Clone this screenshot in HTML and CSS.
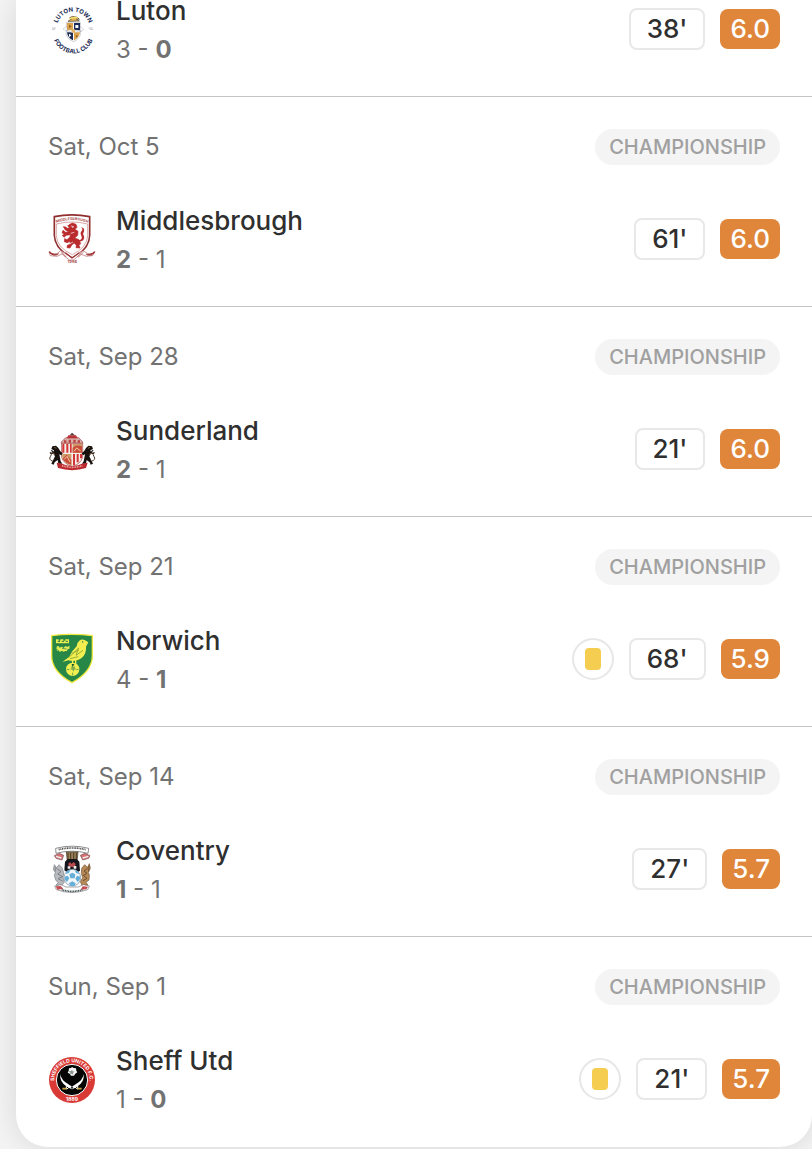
FILE: index.html
```html
<!DOCTYPE html>
<html lang="en">
<head>
<meta charset="utf-8">
<meta name="viewport" content="width=device-width, initial-scale=1">
<title>Recent matches</title>
<link rel="stylesheet" href="styles.css">
</head>
<body>
<main class="card">
<ul class="matches">
  <li class="match">
    <div class="match-main">
      <svg class="crest" viewBox="24 9 144 156" role="img" aria-label="Luton crest">
        <defs>
          <path id="luton-top" d="M52 72A49 49 0 0 1 147 72"/>
          <path id="luton-bottom" d="M38 98A62 62 0 0 0 162 98"/>
        </defs>
        <text class="crest-text luton-text"><textPath href="#luton-top" startOffset="50%" text-anchor="middle">LUTON TOWN</textPath></text>
        <text class="crest-text luton-text"><textPath href="#luton-bottom" startOffset="50%" text-anchor="middle">FOOTBALL CLUB</textPath></text>
        <path d="M36 84h12M36 88h9M146 84h12M149 88h10" stroke="#a9aeb8" stroke-width="2"/>
        <path d="M79 67h42v37q-4 14-21 21-17-7-21-21z" fill="#fff" stroke="#b8b8bc" stroke-width="2"/>
        <path d="M81 69h18v22H81zM102 97h18q-2 17-18 24z" fill="#dda34c"/>
        <path d="M102 69h18v22h-18zM81 97h18v24q-16-7-18-24z" fill="#1b2b55"/>
        <path d="M106 75h9v9h-9zM87 101l7 5-7 6z" fill="#fff"/>
        <path d="M87 74l8 5-8 6zM107 105l7 2-4 7z" fill="#8d6426"/>
        <path d="M78 92l20-3 27 4-26 5zM69 87l12-7v15zM121 80l11 8-11 8z" fill="#fff" stroke="#93979f"/>
        <circle cx="100" cy="93" r="6" fill="#e4b66c"/>
        <path d="M84 64l10-7-5-4 9-4 14 3 6 6-10-2 10 7z" fill="#e2b24d" stroke="#42392f" stroke-width="2"/>
        <path d="M88 56l15-4 10 2" fill="none" stroke="#f5e273" stroke-width="4"/>
      </svg>
      <div class="fixture"><h2 class="opponent">Luton</h2><p class="score">3 - <b>0</b></p></div>
      <div class="stats"><span class="minutes">38'</span><span class="rating">6.0</span></div>
    </div>
  </li>
  <li class="match">
    <div class="match-head"><time datetime="10-05">Sat, Oct 5</time><span class="league">CHAMPIONSHIP</span></div>
    <div class="match-main">
      <svg class="crest" viewBox="24 24 144 156" role="img" aria-label="Middlesbrough crest">
        <defs><path id="boro-top" d="M50 53Q97 37 142 53"/></defs>
        <path d="M43 35Q96 24 149 35V91Q148 133 97 159 45 133 43 91z" fill="#fff" stroke="#8f2f2f" stroke-width="5"/>
        <path d="M49 57Q96 45 143 57V92Q141 128 97 149 51 128 49 92z" fill="none" stroke="#c97b7b" stroke-width="2"/>
        <text class="crest-text boro-text"><textPath href="#boro-top" startOffset="50%" text-anchor="middle">MIDDLESBROUGH</textPath></text>
        <path d="M87 59l10-5 11 4 3 9-6 6 9 6-1 12-9 8 13 5 5 12-5 5 3 8-12-1 1-7-6-7-8 6-5 9-9-1 1-7 9-3-1-9-8 4-9-3 1-9 7 3 9-8 1-7-12 2-7 6-5-6 6-3-7-5 3-7 8 6 9-2-10-5-6-10 7 1 5 4 7-2-6-5z" fill="#b92b2d" stroke="#b92b2d" stroke-width="2"/>
        <path d="M113 106q17-1 11-14-5-8 1-14 5-6-2-12 12 3 9 13-5 7 0 15 5 15-19 17z" fill="#b92b2d"/>
        <path d="M93 63l8 2-5 3M92 85l11-3M99 111l-9 5" fill="none" stroke="#fff" stroke-width="2"/>
        <path d="M27 140q9 10 25 5l10-8 14 8 20 14 22-15 11-7 13 8q16 4 22-5l-5 11-20 3-17-7-22 18H88L66 147l-15 7-20-2z" fill="#fff" stroke="#b46464" stroke-width="2"/>
        <path d="M28 140q8 13 25 8M164 140q-8 13-25 8M76 143l20 16 22-16" fill="none" stroke="#9b3434" stroke-width="4"/>
        <path d="M40 151l17-5M65 142l14 14M114 156l15-15M138 148l17 4" stroke="#b86060" stroke-width="5" stroke-dasharray="2 2"/>
        <text class="crest-text boro-year" x="97" y="173" text-anchor="middle">1986</text>
      </svg>
      <div class="fixture"><h2 class="opponent">Middlesbrough</h2><p class="score"><b>2</b> - 1</p></div>
      <div class="stats"><span class="minutes">61'</span><span class="rating">6.0</span></div>
    </div>
  </li>
  <li class="match">
    <div class="match-head"><time datetime="09-28">Sat, Sep 28</time><span class="league">CHAMPIONSHIP</span></div>
    <div class="match-main">
      <svg class="crest" viewBox="24 9 144 156" role="img" aria-label="Sunderland crest">
        <path d="M64 66l13-13h39l12 13v4H64z" fill="#d9afa9" stroke="#963d3b" stroke-width="2"/>
        <path d="M80 55l5-9h23l5 9z" fill="#b83237"/>
        <path d="M89 46l7-8 9 8z" fill="#5a403d"/>
        <path d="M72 61h7v7h-7zM86 59h7v9h-7zM100 59h7v9h-7zM113 61h7v7h-7z" fill="#bc4142"/>
        <path d="M65 70h63v42q-7 21-31 27-25-6-32-27z" fill="#f4eee7" stroke="#9b3330" stroke-width="2"/>
        <path d="M67 72h6v26h-6zM79 72h6v26h-6zM90 72h5v26h-5zM99 102h6v33h-6zM110 102h6v25h-6zM120 102h6v13h-6z" fill="#d33435"/>
        <path d="M98 72h28v26H98zM67 102h27v34q-23-7-27-25z" fill="#cc9b68"/>
        <path d="M98 83q12-11 28-4v19H98zM68 116l12-12 14 16v14q-20-6-26-18z" fill="#c94e3b"/>
        <path d="M102 94l8-10 12 9M73 118l8-9 9 17" fill="none" stroke="#f2d1a0" stroke-width="3"/>
        <path d="M37 79l11-2 7 7 6 10 7 6-4 6-6-3 2 10 2 11 5 7H55l-2-11-9 7-3 7-7-3 6-12 5-10-5-8-9 1-2-5 9 1-6-8 5 1 3 4 2-4-8-4z" fill="#18120f"/>
        <path d="M156 79l-11-2-7 7-6 10-7 6 4 6 6-3-2 10-2 11-5 7h12l2-11 9 7 3 7 7-3-6-12-5-10 5-8 9 1 2-5-9 1 6-8-5 1-3 4-2-4 8-4z" fill="#18120f"/>
        <path d="M39 124q-14-5-8-14 6-6 0-13M154 124q15-5 8-14-5-6 0-13" fill="none" stroke="#4a3526" stroke-width="3"/>
        <path d="M43 82l6 3M39 101l6 2M150 82l-6 3M154 101l-6 2" stroke="#b98d51" stroke-width="2"/>
        <path d="M50 128l16 3q31 14 60 0l17-3-5 16q-41 13-84 0z" fill="#bb292f"/>
        <path d="M66 137q31 10 61 0" fill="none" stroke="#ecaaa1" stroke-width="5" stroke-dasharray="3 2"/>
      </svg>
      <div class="fixture"><h2 class="opponent">Sunderland</h2><p class="score"><b>2</b> - 1</p></div>
      <div class="stats"><span class="minutes">21'</span><span class="rating">6.0</span></div>
    </div>
  </li>
  <li class="match">
    <div class="match-head"><time datetime="09-21">Sat, Sep 21</time><span class="league">CHAMPIONSHIP</span></div>
    <div class="match-main">
      <svg class="crest" viewBox="24 24 144 156" role="img" aria-label="Norwich crest">
        <path d="M35 32Q95 24 157 32V92Q157 139 96 173 35 139 35 92z" fill="#268746" stroke="#f0e83e" stroke-width="4"/>
        <path d="M48 43h8v4h5v-4h9v4h6v-4h11v12H48z" fill="#eaf04d"/>
        <path d="M53 49h7m5 0h7m5 0h7M48 58h39" stroke="#347540" stroke-width="3"/>
        <path d="M48 67q8-8 11 1l6-3 6 4 4-5 8 1 6-3-1 9-7 3 1 5-6-1-5 3-4-4-8 4-2-5-7 2 3-6-6 1 5-5z" fill="#e4ed57"/>
        <path d="M66 70l14 2M70 82h18" stroke="#287947" stroke-width="2"/>
        <path d="M145 52l-10-6q-9-5-17 1-7 5-8 17-14 13-23 32l-20 15 18-5q23 6 39-6 16-13 14-35z" fill="#f3ef50"/>
        <path d="M86 98l30-29-8 22 21-15M90 101l25-6M96 85l20-9" fill="none" stroke="#9aae36" stroke-width="3"/>
        <circle cx="128" cy="51" r="2" fill="#24693b"/>
        <path d="M98 105v13m9-13v13" stroke="#f3ef50" stroke-width="4"/>
        <circle cx="98" cy="133" r="20" fill="#f3ef50"/>
        <path d="M98 119l2 7 6-2-2 6 6 2-7 2-3 6-3-6-8-2 6-2-3-6 6 2z" fill="#7dac4c"/>
        <path d="M96 117l2 8 4-8M80 133l8 1M109 134l7-1M98 143v8" stroke="#278044" stroke-width="2"/>
      </svg>
      <div class="fixture"><h2 class="opponent">Norwich</h2><p class="score">4 - <b>1</b></p></div>
      <div class="stats"><span class="booking" role="img" aria-label="Yellow card"></span><span class="minutes">68'</span><span class="rating">5.9</span></div>
    </div>
  </li>
  <li class="match">
    <div class="match-head"><time datetime="09-14">Sat, Sep 14</time><span class="league">CHAMPIONSHIP</span></div>
    <div class="match-main">
      <svg class="crest" viewBox="24 15 144 156" role="img" aria-label="Coventry crest">
        <path d="M47 31q50-13 99 0l-2 15q-49-13-96 0z" fill="#fff" stroke="#555" stroke-width="2"/>
        <path d="M56 35q41-10 81 0" fill="none" stroke="#444" stroke-width="5" stroke-dasharray="3 2"/>
        <path d="M43 53l15-7 13 6-5 14-18-5zM121 52l14-6 15 7-4 8-18 5z" fill="#d87176" stroke="#6e5252" stroke-width="2"/>
        <path d="M48 55l16 5M128 60l17-5" stroke="#eee" stroke-width="4"/>
        <path d="M79 42h35l-3 29H82z" fill="#9d8053" stroke="#3f3427" stroke-width="2"/>
        <path d="M84 45v25m8-26v26m9-26v26m8-25v25" stroke="#453b2b" stroke-width="3"/>
        <path d="M75 71l8-8h27l8 8 2 27-10 6H83l-10-7z" fill="#15161b"/>
        <path d="M85 77l6-5 3 6 7-6 6 6-2 7-8 3-11-4z" fill="#b74b4e"/>
        <path d="M83 85h8v7h-8zm18-1h8v8h-8z" fill="#eee"/>
        <circle cx="97" cy="119" r="25" fill="#f2f8fa" stroke="#71889b" stroke-width="2"/>
        <path d="M88 109l9-5 9 5-2 12H91zM73 116l10-3 5 8-7 11q-8-5-8-16zM121 116l-10-3-5 9 7 10q8-6 8-16zM87 136l10-6 10 6-3 8H91zM80 99l11-3-4 9-9 3zM104 96l9 4 5 8-10-3z" fill="#65afd9"/>
        <path d="M43 80l7 9 7-9 9 9 5 15-2 16 4 12-7 10H48l7-9-7-5-5-15 3-10-6-8z" fill="#b8babd" stroke="#797d81" stroke-width="2"/>
        <path d="M49 91l14 10-10 7 15 8-14 6 14 7M45 86l1 14" fill="none" stroke="#7c8189" stroke-width="3"/>
        <path d="M148 77l-5 11-9-8-9 11-1 15 4 13-7 12 5 11h18l-6-9 9-7 1-15-3-8 6-12z" fill="#b58958" stroke="#735437" stroke-width="2"/>
        <path d="M143 91l-11 8 9 7-11 6 11 9-12 7M147 83l-1 18" fill="none" stroke="#71502f" stroke-width="3"/>
        <path d="M44 144l19-4 15 7h37l15-7 18 4-5 11q-48 17-94 0z" fill="#fff" stroke="#777" stroke-width="2"/>
        <path d="M47 145l15-1 8 8-18 3zM128 145l16 1-5 8-17 1z" fill="#c44d55"/>
        <path d="M65 155q31 10 63 0" fill="none" stroke="#37474b" stroke-width="5" stroke-dasharray="3 2"/>
      </svg>
      <div class="fixture"><h2 class="opponent">Coventry</h2><p class="score"><b>1</b> - 1</p></div>
      <div class="stats"><span class="minutes">27'</span><span class="rating">5.7</span></div>
    </div>
  </li>
  <li class="match">
    <div class="match-head"><time datetime="09-01">Sun, Sep 1</time><span class="league">CHAMPIONSHIP</span></div>
    <div class="match-main">
      <svg class="crest" viewBox="24 15 144 156" role="img" aria-label="Sheffield United crest">
        <defs><path id="sheff-top" d="M48 118A53 53 0 1 1 144 118"/></defs>
        <circle cx="96" cy="96" r="69" fill="#d93a36"/>
        <circle cx="96" cy="96" r="47" fill="#050505" stroke="#fff" stroke-width="3"/>
        <text class="crest-text sheff-text"><textPath href="#sheff-top" startOffset="50%" text-anchor="middle">SHEFFIELD UNITED F.C.</textPath></text>
        <text class="crest-text sheff-year" x="96" y="160" text-anchor="middle">1889</text>
        <path d="M61 78q3 19 22 29l17 12-5 5-14-8q-23-13-20-38zM131 78q-3 19-22 29l-17 12 5 5 14-8q23-13 20-38z" fill="#fff"/>
        <path d="M91 114l-10 9M101 114l11 9M79 112v12m34-12v12" stroke="#fff" stroke-width="3"/>
        <path d="M67 122h13M112 122h13" stroke="#c8a542" stroke-width="5"/>
        <path d="M96 57l5 3 7 1 1 7 3 5-6 4-4 6h-9l-4-6-6-3 3-6 1-7 6-1z" fill="#f6f6f6"/>
        <path d="M96 65l2 5 6 1-5 3 1 6-5-3-5 3 1-6-5-4 7-1z" fill="#8d9697"/>
      </svg>
      <div class="fixture"><h2 class="opponent">Sheff Utd</h2><p class="score">1 - <b>0</b></p></div>
      <div class="stats"><span class="booking" role="img" aria-label="Yellow card"></span><span class="minutes">21'</span><span class="rating">5.7</span></div>
    </div>
  </li>
</ul>
</main>
</body>
</html>
```
FILE: styles.css
```css
* { box-sizing: border-box; }

body {
  margin: 0;
  padding-left: 16px;
  background: #f4f4f4;
  color: #2f2f2f;
  font-family: Inter, "Liberation Sans", sans-serif;
  overflow-x: hidden;
}

.card {
  background: #fff;
  border-radius: 0 0 32px 32px;
  box-shadow: 0 0 32px rgba(0, 0, 0, 0.12);
  margin-bottom: 2px;
}

.matches { margin: 0; padding: 0; list-style: none; }

.match {
  padding: 32px 32px 38px;
  border-bottom: 1px solid #c4c4c4;
}
.match:first-child { padding-top: 0; }
.match:last-child { border-bottom-color: transparent; }

.match-head {
  display: flex;
  align-items: center;
  justify-content: space-between;
  margin-bottom: 45px;
  color: #727272;
  font-size: 24px;
  line-height: 36px;
}

.league {
  padding: 0 14px;
  border-radius: 18px;
  background: #f4f4f4;
  color: #a0a0a0;
  font-size: 20px;
  font-weight: 500;
}

.match-main { display: flex; align-items: center; }

.crest {
  flex: none;
  width: 48px;
  height: 52px;
  margin-right: 20px;
  overflow: visible;
}
.crest-text { font-weight: 700; }
.luton-text { fill: #1b2b55; font-size: 18px; }
.boro-text { fill: #a94b4b; font-size: 11px; }
.boro-year { fill: #a94b4b; font-size: 12px; }
.sheff-text { fill: #fff; font-size: 15px; }
.sheff-year { fill: #fff; font-size: 15px; }

.fixture { flex: 1; display: grid; gap: 20px; }
.opponent { margin: 0; font-size: 26px; font-weight: 500; line-height: 22px; }
.score { margin: 0; color: #727272; font-size: 24px; line-height: 16px; }
.score b { font-weight: 700; }

.stats { display: flex; align-items: center; gap: 15px; }

.minutes,
.rating {
  border-radius: 8px;
  font-size: 26px;
  font-weight: 500;
}
.minutes { padding: 0 16px; border: 2px solid #e8e8e8; line-height: 38px; }
.rating { padding: 0 10px; background: #df863a; color: #fff; line-height: 40px; }

.booking {
  display: grid;
  place-items: center;
  width: 42px;
  height: 42px;
  border: 2px solid #e8e6e8;
  border-radius: 50%;
}
.booking::before {
  content: "";
  width: 16px;
  height: 22px;
  border-radius: 4px;
  background: #f5ce51;
}
```
